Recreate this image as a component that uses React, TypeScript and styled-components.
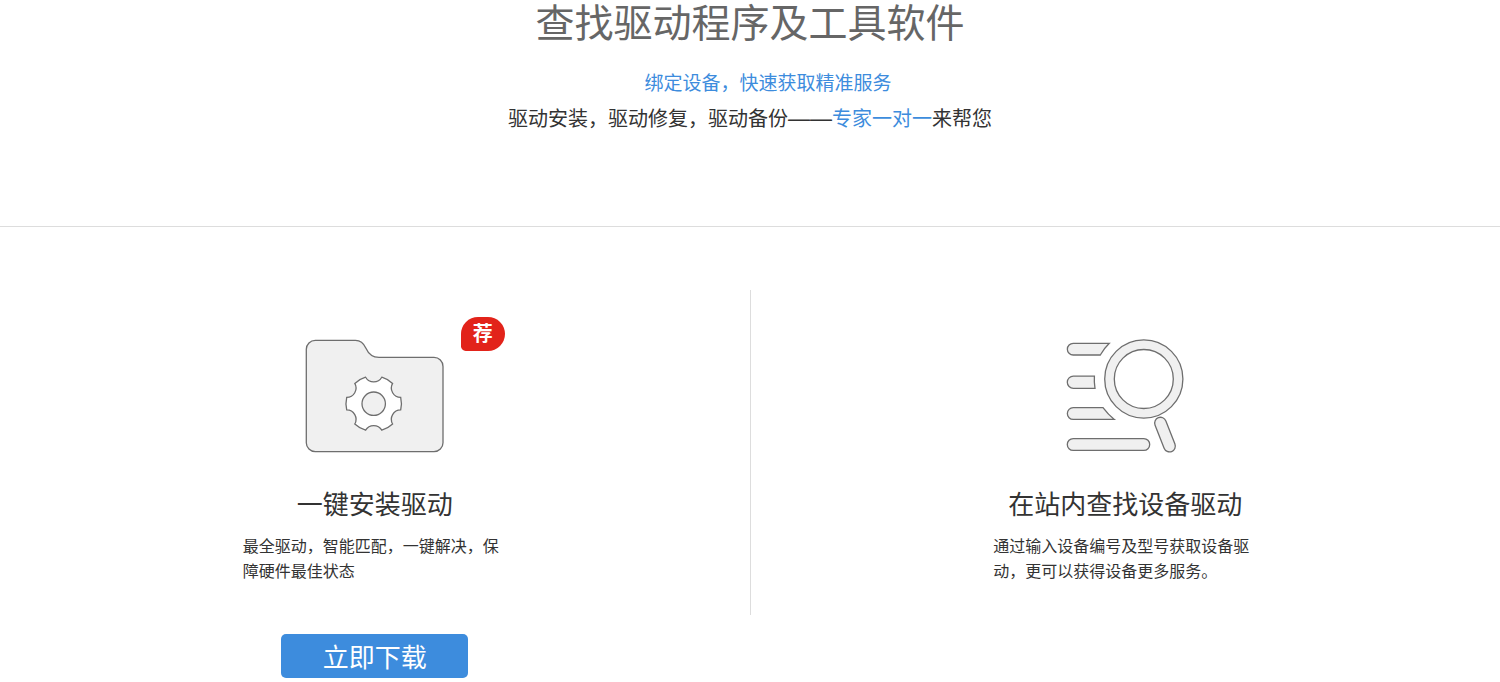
import React from "react";
import styled, { createGlobalStyle } from "styled-components";

const GlobalStyle = createGlobalStyle`
  * { box-sizing: border-box; }
  body {
    margin: 0;
    background: #fff;
    color: #333;
    font-family: "Noto Sans CJK SC", sans-serif;
  }
  h1, h2, p { margin: 0; font-weight: 400; }
`;

const Header = styled.header`
  display: flex;
  flex-direction: column;
  align-items: center;
  padding-bottom: 90px;
  border-bottom: 1px solid #ddd;
  text-align: center;
`;

const Title = styled.h1`
  color: #666;
  font-size: 39px;
  line-height: 40px;
`;

const TextLink = styled.a`
  color: #3d8cdd;
  text-decoration: none;
`;

const BindLine = styled.p`
  margin-top: 24px;
  padding-left: 36px;
  font-size: 19px;
  line-height: 36px;
`;

const ServiceLine = styled.p`
  font-size: 20px;
  line-height: 36px;
`;

const Dash = styled.span`
  font-family: "Liberation Sans", sans-serif;
  font-size: 22px;
  line-height: 20px;
`;

const Options = styled.main`
  display: flex;
  align-items: flex-start;
  padding-top: 63px;
`;

const Option = styled.section<{ $divided?: boolean }>`
  display: flex;
  flex: 1 1 0;
  flex-direction: column;
  align-items: center;
  padding: 48px 0 ${(p) => (p.$divided ? 32 : 0)}px;
  border-left: ${(p) => (p.$divided ? "1px solid #ddd" : "0")};
`;

const Figure = styled.div`
  position: relative;
  height: 116px;

  svg {
    display: block;
    fill: #f0f0f0;
    stroke: #6e6e6e;
    stroke-width: 1.3;
  }
`;

const Badge = styled.span`
  position: absolute;
  top: -21px;
  left: 156px;
  width: 44px;
  height: 34px;
  border-radius: 18px 18px 18px 5px;
  background: #e2231a;
  color: #fff;
  font-size: 20px;
  font-weight: 700;
  line-height: 32px;
  text-align: center;
`;

const OptionTitle = styled.h2`
  margin-top: 30px;
  font-size: 26px;
  line-height: 38px;
`;

const Description = styled.p`
  width: 256px;
  margin: 11px 8px 0 0;
  font-size: 16px;
  line-height: 25px;
`;

const DownloadButton = styled.button`
  width: 187px;
  height: 44px;
  margin: 51px 0 4px;
  padding: 0;
  border: 0;
  border-radius: 5px;
  background: #3d8cdd;
  color: #fff;
  font: inherit;
  font-size: 26px;
  line-height: 42px;
  cursor: pointer;
`;

// Six-toothed gear: each notch spans 34 degrees and bows toward the centre.
function gearPath(cx: number, cy: number, r: number) {
  const point = (deg: number) => {
    const a = (deg * Math.PI) / 180;
    return `${(cx + r * Math.sin(a)).toFixed(2)} ${(cy - r * Math.cos(a)).toFixed(2)}`;
  };
  let d = `M${point(-17)}`;
  for (let a = 0; a < 360; a += 60) {
    d += `A9.4 9.4 0 0 0 ${point(a + 17)}A${r} ${r} 0 0 1 ${point(a + 43)}`;
  }
  return d + "Z";
}

const FolderIcon = () => (
  <svg width="140" height="116" viewBox="0 0 140 116" aria-hidden="true">
    <path d="M10.3 2.3H50.5C56.5 2.3 59 6 60.8 10C63.5 16 67 19.4 74 19.4H129A9 9 0 0 1 138 28.4V104.7A9 9 0 0 1 129 113.7H10.3A9 9 0 0 1 1.3 104.7V11.3A9 9 0 0 1 10.3 2.3Z" />
    <path d={gearPath(68.7, 65.7, 27.7)} fill="#fff" />
    <circle cx="68.7" cy="65.7" r="11.7" />
  </svg>
);

const SearchListIcon = () => (
  <svg width="139" height="116" viewBox="0 0 139 116" aria-hidden="true">
    <path d="M17.2 5.3H53.3Q48 10.5 44.3 17H17.2A5.85 5.85 0 0 1 17.2 5.3Z" />
    <path d="M17.4 38.1H38.4Q38 44.5 39 50.3H17.4A6.1 6.1 0 0 1 17.4 38.1Z" />
    <path d="M17.2 69.7H47Q52 76.5 58.3 81.4H17.2A5.85 5.85 0 0 1 17.2 69.7Z" />
    <rect x="11.3" y="100.6" width="82.4" height="11.8" rx="5.9" />
    <circle cx="87.8" cy="41" r="39.1" />
    <circle cx="87.8" cy="41" r="29.5" fill="#fff" />
    <rect x="103.2" y="78.4" width="11.6" height="36.4" rx="5.8" transform="rotate(-21.4 109 96.6)" />
  </svg>
);

export default function App() {
  return (
    <>
      <GlobalStyle />
      <Header>
        <Title>查找驱动程序及工具软件</Title>
        <BindLine>
          <TextLink href="#bind">绑定设备，快速获取精准服务</TextLink>
        </BindLine>
        <ServiceLine>
          驱动安装，驱动修复，驱动备份<Dash>——</Dash>
          <TextLink href="#expert">专家一对一</TextLink>来帮您
        </ServiceLine>
      </Header>
      <Options>
        <Option>
          <Figure>
            <FolderIcon />
            <Badge>荐</Badge>
          </Figure>
          <OptionTitle>一键安装驱动</OptionTitle>
          <Description>最全驱动，智能匹配，一键解决，保障硬件最佳状态</Description>
          <DownloadButton type="button">立即下载</DownloadButton>
        </Option>
        <Option $divided>
          <Figure>
            <SearchListIcon />
          </Figure>
          <OptionTitle>在站内查找设备驱动</OptionTitle>
          <Description>通过输入设备编号及型号获取设备驱动，更可以获得设备更多服务。</Description>
        </Option>
      </Options>
    </>
  );
}
